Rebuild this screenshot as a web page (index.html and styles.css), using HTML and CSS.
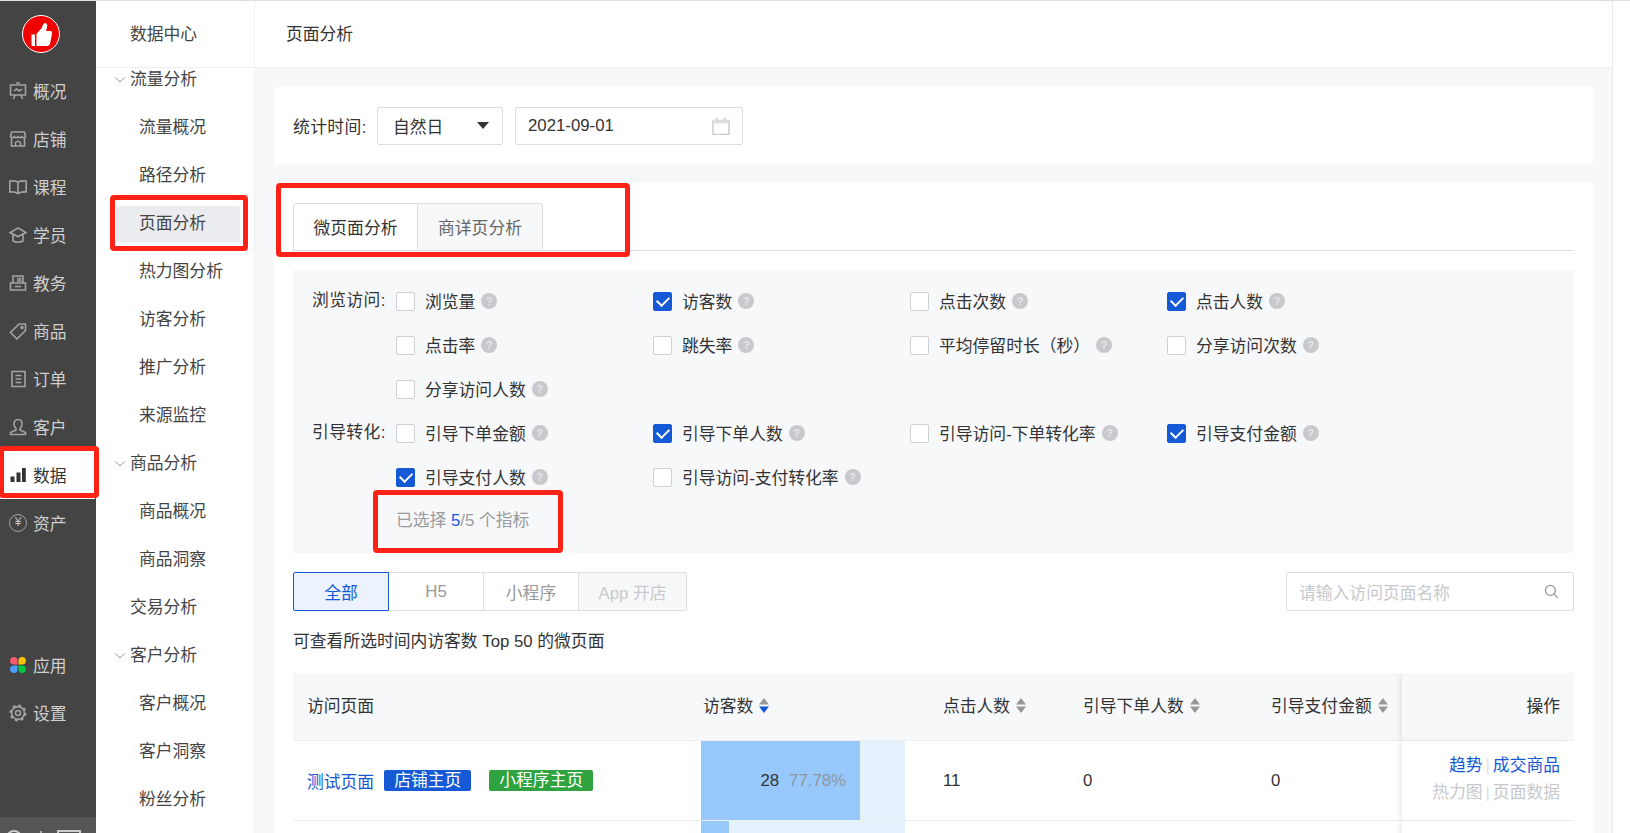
FILE: index.html
```html
<!DOCTYPE html>
<html lang="zh-CN">
<head>
<meta charset="utf-8">
<title>页面分析</title>
<link rel="stylesheet" href="styles.css">
</head>
<body>
<div class="app">
  <aside class="rail">
    <div class="logo">
      <svg width="38" height="38" viewBox="0 0 38 38"><circle cx="19" cy="19" r="18.5" fill="#f00000" stroke="#fff" stroke-width="1"/><path fill="#fff" d="M9.500 19.500h3.500v11.500h-3.500zM14.500 19 20 12.500Q21 8 23.500 8 26 9 25 12.500L24 16h5q1.800 1 1 3l-2 10q-.6 2-3 2H14.500z"/></svg>
    </div>
    <nav class="rail-list">
      <a class="rail-item"><svg class="ri" viewBox="0 0 18 18"><path d="M1.500 3h15v10h-15zM7 1h4M6 13l-1.500 4M12 13l1.500 4M5 9l2.500-2 3 2 2.500-2"/></svg>概况</a>
      <a class="rail-item"><svg class="ri" viewBox="0 0 18 18"><path d="M2.500 2h13l1 4.500q-1.500 2.500-3.800 0-1.800 2.500-3.700 0-1.900 2.500-3.700 0-2.300 2.500-3.800 0zM2.500 8v8h13V8M6.500 16v-3.500q2.500-2.500 5 0V16"/></svg>店铺</a>
      <a class="rail-item"><svg class="ri" viewBox="0 0 18 18"><path d="M9 4Q6 2.500.8 3v11Q6 13.500 9 15.500 12 13.500 17.200 14V3Q12 2.500 9 4zM9 4v11.500"/></svg>课程</a>
      <a class="rail-item"><svg class="ri" viewBox="0 0 18 18"><path d="M9 2 1 6.500l8 4 8-4zM4 8.500v6.500q5 2.500 10 0V8.500"/></svg>学员</a>
      <a class="rail-item"><svg class="ri" viewBox="0 0 18 18"><path d="M4 9V2h10v7M1.500 9h15v7h-15zM6 12.500h6"/><path class="fill" d="M8 3.500h4.500V8H8z"/></svg>教务</a>
      <a class="rail-item"><svg class="ri" viewBox="0 0 18 18"><path d="M10 2h6.500v6.500L8 17 1.500 10.500z"/><circle cx="13" cy="5.500" r="1"/></svg>商品</a>
      <a class="rail-item"><svg class="ri" viewBox="0 0 18 18"><path d="M3 1.500h13v15H3zM6.500 5.500h6M6.500 9h6M6.500 12.500h6"/></svg>订单</a>
      <a class="rail-item"><svg class="ri" viewBox="0 0 18 18"><path d="M9 1.500c-2.600 0-4 2-4 4.500 0 2 .8 3.500 2 4.500V12l-5.500 2.500V16.500h15v-2L11 12v-1.500c1.200-1 2-2.500 2-4.500 0-2.500-1.400-4.500-4-4.500z"/></svg>客户</a>
      <a class="rail-item is-active"><svg class="ri" viewBox="0 0 18 18"><path class="bar" d="M1.500 10.500h4V16h-4zM7.500 6.500h4V16h-4zM13 2h3.800v14H13z"/></svg>数据</a>
      <a class="rail-item"><span class="yen">¥</span>资产</a>
    </nav>
    <div class="rail-bottom">
      <a class="rail-item"><svg class="ri" viewBox="0 0 18 18"><path class="c1" d="M1 5a4 4 0 0 1 4-4q3.500 0 3.500 3.500V8.500H5A4 4 0 0 1 1 5z"/><path class="c2" d="M17 5a4 4 0 0 0-4-4q-3.500 0-3.500 3.500V8.500H13a4 4 0 0 0 4-3.500z"/><path class="c3" d="M1 13.500a4 4 0 0 1 4-4h3.500V13q0 4-3.500 4a4 4 0 0 1-4-3.500z"/><path class="c4" d="M17 13.500a4 4 0 0 0-4-4H9.500V13q0 4 3.500 4a4 4 0 0 0 4-3.500z"/></svg>应用</a>
      <a class="rail-item"><svg class="ri" viewBox="0 0 18 18"><circle cx="9" cy="9" r="6.400"/><circle class="teeth" cx="9" cy="9" r="7.400"/><circle cx="9" cy="9" r="2.500"/></svg>设置</a>
    </div>
    <div class="rail-foot"><span class="foot-circle"></span><span class="foot-dot"></span><span class="foot-rect"></span></div>
  </aside>

  <aside class="subnav">
    <div class="subnav-head">数据中心</div>
    <div class="subnav-scroll">
      <ul class="subnav-list">
        <li class="sub-group"><svg class="chev" viewBox="0 0 10 6"><path d="M.5.500 5 5 9.500.500"/></svg>流量分析</li>
        <li class="sub-item"><span>流量概况</span></li>
        <li class="sub-item"><span>路径分析</span></li>
        <li class="sub-item is-active"><span>页面分析</span></li>
        <li class="sub-item"><span>热力图分析</span></li>
        <li class="sub-item"><span>访客分析</span></li>
        <li class="sub-item"><span>推广分析</span></li>
        <li class="sub-item"><span>来源监控</span></li>
        <li class="sub-group"><svg class="chev" viewBox="0 0 10 6"><path d="M.5.500 5 5 9.500.500"/></svg>商品分析</li>
        <li class="sub-item"><span>商品概况</span></li>
        <li class="sub-item"><span>商品洞察</span></li>
        <li class="sub-group">交易分析</li>
        <li class="sub-group"><svg class="chev" viewBox="0 0 10 6"><path d="M.5.500 5 5 9.500.500"/></svg>客户分析</li>
        <li class="sub-item"><span>客户概况</span></li>
        <li class="sub-item"><span>客户洞察</span></li>
        <li class="sub-item"><span>粉丝分析</span></li>
      </ul>
    </div>
  </aside>

  <main class="main">
    <header class="topbar">页面分析</header>
    <div class="content">
      <section class="card date-card">
        <span class="date-label">统计时间:</span>
        <div class="field select"><span>自然日</span><i class="caret"></i></div>
        <div class="field date"><span>2021-09-01</span>
          <svg class="cal" viewBox="0 0 18 18"><path d="M1 3.500h16v14H1z"/><path class="cal-fill" d="M1 3h16v3.500H1z"/><path d="M5 .500v3M13 .500v3"/></svg>
        </div>
      </section>

      <section class="card main-card">
        <div class="tabs">
          <div class="tab is-active">微页面分析</div>
          <div class="tab">商详页分析</div>
        </div>

        <div class="filters">
          <div class="filter-group">
            <div class="filter-label">浏览访问:</div>
            <div class="filter-items">
              <label class="opt"><i class="box"></i>浏览量<b class="help">?</b></label>
              <label class="opt"><i class="box on"></i>访客数<b class="help">?</b></label>
              <label class="opt"><i class="box"></i>点击次数<b class="help">?</b></label>
              <label class="opt"><i class="box on"></i>点击人数<b class="help">?</b></label>
              <label class="opt"><i class="box"></i>点击率<b class="help">?</b></label>
              <label class="opt"><i class="box"></i>跳失率<b class="help">?</b></label>
              <label class="opt"><i class="box"></i>平均停留时长（秒）<b class="help">?</b></label>
              <label class="opt"><i class="box"></i>分享访问次数<b class="help">?</b></label>
              <label class="opt"><i class="box"></i>分享访问人数<b class="help">?</b></label>
            </div>
          </div>
          <div class="filter-group">
            <div class="filter-label">引导转化:</div>
            <div class="filter-items">
              <label class="opt"><i class="box"></i>引导下单金额<b class="help">?</b></label>
              <label class="opt"><i class="box on"></i>引导下单人数<b class="help">?</b></label>
              <label class="opt"><i class="box"></i>引导访问-下单转化率<b class="help">?</b></label>
              <label class="opt"><i class="box on"></i>引导支付金额<b class="help">?</b></label>
              <label class="opt"><i class="box on"></i>引导支付人数<b class="help">?</b></label>
              <label class="opt"><i class="box"></i>引导访问-支付转化率<b class="help">?</b></label>
            </div>
          </div>
          <div class="selected">已选择 <em>5</em>/5 个指标</div>
        </div>

        <div class="toolbar">
          <div class="seg">
            <div class="seg-item is-active">全部</div>
            <div class="seg-item">H5</div>
            <div class="seg-item">小程序</div>
            <div class="seg-item is-disabled">App 开店</div>
          </div>
          <div class="search"><span>请输入访问页面名称</span>
            <svg class="search-icon" viewBox="0 0 16 16"><circle cx="6.800" cy="6.800" r="5.300"/><path d="m10.800 10.800 4 4"/></svg>
          </div>
        </div>

        <p class="hint">可查看所选时间内访客数 Top 50 的微页面</p>

        <div class="table">
          <div class="tr th">
            <div class="td first">访问页面</div>
            <div class="td cell-bar">访客数<svg class="sort" viewBox="0 0 12 15"><path d="M6 0l5 6.500H1z"/><path class="down" d="M6 15 1 8.500h10z"/></svg></div>
            <div class="td">点击人数<svg class="sort" viewBox="0 0 12 15"><path d="M6 0l5 6.500H1z"/><path d="M6 15 1 8.500h10z"/></svg></div>
            <div class="td">引导下单人数<svg class="sort" viewBox="0 0 12 15"><path d="M6 0l5 6.500H1z"/><path d="M6 15 1 8.500h10z"/></svg></div>
            <div class="td">引导支付金额<svg class="sort" viewBox="0 0 12 15"><path d="M6 0l5 6.500H1z"/><path d="M6 15 1 8.500h10z"/></svg></div>
            <div class="td ops">操作</div>
          </div>
          <div class="tr">
            <div class="td first"><a class="link">测试页面</a><span class="tag blue">店铺主页</span><span class="tag green">小程序主页</span></div>
            <div class="td bar-td"><div class="bar-track"><div class="bar-fill" style="width:77.78%"></div><div class="bar-text">28<span class="pct">77.78%</span></div></div></div>
            <div class="td">11</div>
            <div class="td">0</div>
            <div class="td">0</div>
            <div class="td ops"><div><a class="link">趋势</a><i class="sep">|</i><a class="link">成交商品</a></div><div class="muted">热力图<i class="sep">|</i>页面数据</div></div>
          </div>
          <div class="tr">
            <div class="td first"></div>
            <div class="td bar-td"><div class="bar-track"><div class="bar-fill" style="width:13.89%"></div></div></div>
            <div class="td"></div>
            <div class="td"></div>
            <div class="td"></div>
            <div class="td ops"></div>
          </div>
        </div>
      </section>
    </div>
  </main>

  <div class="mark mark-nav"></div>
  <div class="mark mark-rail"></div>
  <div class="mark mark-tabs"></div>
  <div class="mark mark-sel"></div>
</div>
</body>
</html>
```

FILE: styles.css
```css
* { box-sizing: border-box; }
html, body { margin: 0; padding: 0; height: 100%; overflow: hidden; background: #fff; }
body {
  font-family: "Liberation Sans", "Noto Sans CJK SC", sans-serif;
  font-size: 16.8px;
  color: #333;
}
a { color: inherit; text-decoration: none; }
i, em { font-style: normal; }
ul { list-style: none; margin: 0; padding: 0; }

.app {
  position: relative;
  display: flex;
  width: 1630px;
  height: 833px;
  border-top: 1px solid #dcdee3;
  overflow: hidden;
}

/* rail */
.rail {
  position: relative;
  z-index: 1;
  flex: 0 0 95px;
  display: flex;
  flex-direction: column;
  align-items: flex-start;
  background: #444;
  color: #cfcfcf;
}
.logo {
  flex: 0 0 66px;
  width: 96px;
  background: #444;
  display: flex;
  align-items: center;
  padding-left: 22px;
}
.rail-list, .rail-bottom { width: 95px; }
.rail-bottom { margin-top: auto; margin-bottom: 80px; }
.rail-item {
  display: flex;
  align-items: center;
  gap: 6px;
  height: 48px;
  padding-left: 9px;
}
.ri {
  width: 18px;
  height: 18px;
  flex: none;
  fill: none;
  stroke: #a3a3a3;
  stroke-width: 1.6;
}
.ri .fill { fill: #8a8a8a; stroke: none; }
.ri .bar { fill: #333; stroke: none; }
.ri .teeth { stroke-width: 2.2; stroke-dasharray: 3 2.810; }
.ri .c1 { fill: #f85c73; stroke: none; }
.ri .c2 { fill: #fcc400; stroke: none; }
.ri .c3 { fill: #4a9dfb; stroke: none; }
.ri .c4 { fill: #00c83c; stroke: none; }
.rail-item.is-active { background: #fff; color: #333; }
.yen {
  flex: none;
  width: 18px;
  height: 18px;
  border: 1.500px solid #a3a3a3;
  border-radius: 50%;
  font-size: 12px;
  line-height: 15px;
  text-align: center;
  color: #c0c0c0;
}
.rail-foot {
  flex: 0 0 16px;
  width: 96px;
  background: #555;
  overflow: hidden;
  display: flex;
  align-items: flex-start;
  padding: 13px 0 0 6px;
}
.foot-circle { width: 16px; height: 16px; border: 2px solid #ccc; border-radius: 50%; flex: none; }
.foot-dot { width: 2px; height: 2px; margin: 1px 0 0 18px; background: #aaa; flex: none; }
.foot-rect { width: 24px; height: 12px; margin-left: 15px; border: 2px solid #ccc; flex: none; }

/* sub navigation */
.subnav {
  flex: 0 0 159px;
  display: flex;
  flex-direction: column;
  background: #fff;
  border-right: 1px solid #eeeff3;
  color: #444;
}
.subnav-head {
  position: relative;
  z-index: 1;
  flex: 0 0 67px;
  display: flex;
  align-items: center;
  padding: 0 0 2px 34px;
  border-bottom: 1px solid #eeeff3;
  background: #fff;
}
.subnav-scroll { flex: 1; overflow: hidden; }
.subnav-list { margin-top: -12px; }
.sub-group {
  position: relative;
  height: 48px;
  line-height: 48px;
  padding-left: 34px;
}
.chev {
  position: absolute;
  left: 19px;
  top: 21px;
  width: 10px;
  height: 6px;
  fill: none;
  stroke: #999;
  stroke-width: 1;
}
.sub-item {
  height: 48px;
  padding: 6px 14px 6px 20px;
}
.sub-item span {
  display: block;
  height: 36px;
  line-height: 36px;
  padding-left: 23px;
  border-radius: 2px;
}
.sub-item.is-active span { background: #ebecf0; }

/* main */
.main {
  flex: 0 0 1358px;
  display: flex;
  flex-direction: column;
  background: #f7f8fa;
  border-right: 1px solid #e8e9ee;
}
.topbar {
  flex: 0 0 67px;
  display: flex;
  align-items: center;
  padding: 0 0 2px 31px;
  background: #fff;
  border-bottom: 1px solid #eeeff3;
}
.content { padding: 19px 19px 0; flex: 1; min-height: 0; }
.card { background: #fff; }
.date-card {
  display: flex;
  align-items: center;
  height: 77px;
  padding: 0 19px;
}
.date-label { width: 84px; letter-spacing: .4px; }
.field {
  display: flex;
  align-items: center;
  justify-content: space-between;
  height: 38px;
  background: #fff;
  border: 1px solid #dcdee0;
  border-radius: 2px;
}
.select { width: 126px; padding: 0 13px 0 15px; }
.date { width: 228px; margin-left: 12px; padding: 0 12px 0 12px; }
.caret {
  width: 0;
  height: 0;
  border-left: 6px solid transparent;
  border-right: 6px solid transparent;
  border-top: 7px solid #333;
}
.cal { width: 18px; height: 18px; fill: none; stroke: #c8c9cc; stroke-width: 1.400; }
.cal .cal-fill { fill: #dcdee0; stroke: none; }

.main-card { margin-top: 19px; padding: 20px 19px 0; height: 700px; }
.tabs { display: flex; height: 48px; border-bottom: 1px solid #dcdee0; }
.tab {
  width: 125px;
  height: 48px;
  display: flex;
  align-items: center;
  justify-content: center;
  border: 1px solid #dcdee0;
  border-left-width: 0;
  background: #f7f8fa;
  color: #666;
  border-radius: 0 3px 0 0;
}
.tab.is-active {
  background: #fff;
  color: #333;
  border-left-width: 1px;
  border-radius: 3px 0 0 0;
}

.filters {
  margin-top: 19px;
  height: 283px;
  padding: 9px 0 0 19px;
  background: #f7f8fa;
}
.filter-group { display: flex; }
.filter-label { flex: 0 0 84px; height: 44px; line-height: 44px; letter-spacing: .4px; }
.filter-items {
  flex: 1;
  display: grid;
  grid-template-columns: repeat(4, 257px);
  grid-auto-rows: 44px;
}
.opt { display: flex; align-items: center; white-space: nowrap; }
.box {
  flex: none;
  width: 19px;
  height: 19px;
  margin-right: 10px;
  display: flex;
  align-items: center;
  justify-content: center;
  background: #fff;
  border: 1px solid #cfd1d6;
  border-radius: 2px;
}
.box.on { background: #1659d6; border-color: #1659d6; }
.box.on::after {
  content: "";
  width: 10px;
  height: 6px;
  margin-top: -2px;
  border-left: 2px solid #fff;
  border-bottom: 2px solid #fff;
  transform: rotate(-45deg);
}
.help {
  flex: none;
  width: 16px;
  height: 16px;
  margin-left: 6px;
  border-radius: 50%;
  background: #c8c9cc;
  color: #e6e6e8;
  font-size: 11px;
  font-weight: 700;
  line-height: 16px;
  text-align: center;
}
.selected {
  height: 44px;
  line-height: 44px;
  margin-left: 84px;
  color: #9b9b9b;
}
.selected em { color: #1659d6; }

.toolbar {
  display: flex;
  justify-content: space-between;
  margin-top: 19px;
  height: 39px;
}
.seg { display: flex; }
.seg-item {
  width: 96px;
  display: flex;
  align-items: center;
  justify-content: center;
  margin-left: -1px;
  border: 1px solid #dcdee0;
  color: #999;
}
.seg-item.is-active {
  position: relative;
  z-index: 1;
  margin-left: 0;
  border-color: #1659d6;
  background: #edf3fe;
  color: #1659d6;
  border-radius: 2px 0 0 2px;
}
.seg-item.is-disabled {
  width: 109px;
  background: #f7f8fa;
  color: #c8c9cc;
  border-radius: 0 2px 2px 0;
}
.search {
  width: 288px;
  display: flex;
  align-items: center;
  justify-content: space-between;
  padding: 0 14px 0 12px;
  border: 1px solid #dcdee0;
  border-radius: 2px;
  color: #c8c9cc;
}
.search-icon { width: 15px; height: 15px; fill: none; stroke: #909399; stroke-width: 1.300; }

.hint { margin: 19px 0; height: 24px; line-height: 24px; }

.table { overflow: hidden; height: 160px; }
.tr {
  display: grid;
  grid-template-columns: 408px 242px 140px 188px 130.500px 172.500px;
  height: 80px;
}
.th { height: 68px; background: #f7f8fa; }
.td {
  display: flex;
  align-items: center;
  border-bottom: 1px solid #ebedf0;
  color: #333;
  white-space: nowrap;
}
.th .td { padding-bottom: 3px; }
.first { padding-left: 14px; }
.cell-bar { padding-left: 2px; }
.sort { width: 12px; height: 15px; margin-left: 5px; flex: none; fill: #999; }
.sort .down { fill: #1659d6; }
.link { color: #1659d6; }
.tag {
  height: 21px;
  line-height: 21px;
  padding: 0 10px;
  border-radius: 2px;
  color: #fff;
}
.tag.blue { margin-left: 10px; background: #1659d6; }
.tag.green { margin-left: 18px; background: #2ea340; }
.bar-td { align-items: stretch; }
.bar-track {
  display: grid;
  width: 204px;
  background: #e6f1fe;
}
.bar-fill, .bar-text { grid-area: 1 / 1; }
.bar-fill { background: #97c8fc; height: 100%; }
.bar-text {
  align-self: center;
  justify-self: end;
  padding-right: 59px;
  color: #333;
}
.pct { margin-left: 10px; color: #8f959e; }
.ops {
  display: flex;
  flex-direction: column;
  align-items: flex-end;
  justify-content: center;
  padding-right: 14px;
  padding-bottom: 3px;
  line-height: 27px;
  background: #fff;
  box-shadow: -4px 0 6px -2px rgba(0, 0, 0, .1);
}
.th .ops { background: #f7f8fa; padding-bottom: 0; }
.sep { margin: 0 3px; color: #dcdee0; }
.muted { color: #c8c9cc; }

/* red review annotations drawn over the screenshot */
.mark {
  position: absolute;
  z-index: 2;
  border: 5px solid #ff2216;
  border-radius: 4px;
  pointer-events: none;
}
.mark-nav { left: 110px; top: 194px; width: 138px; height: 56px; }
.mark-rail { left: -1px; top: 445px; width: 100px; height: 52px; }
.mark-tabs { left: 276px; top: 182px; width: 354px; height: 74px; }
.mark-sel { left: 373px; top: 489px; width: 190px; height: 63px; }
```
